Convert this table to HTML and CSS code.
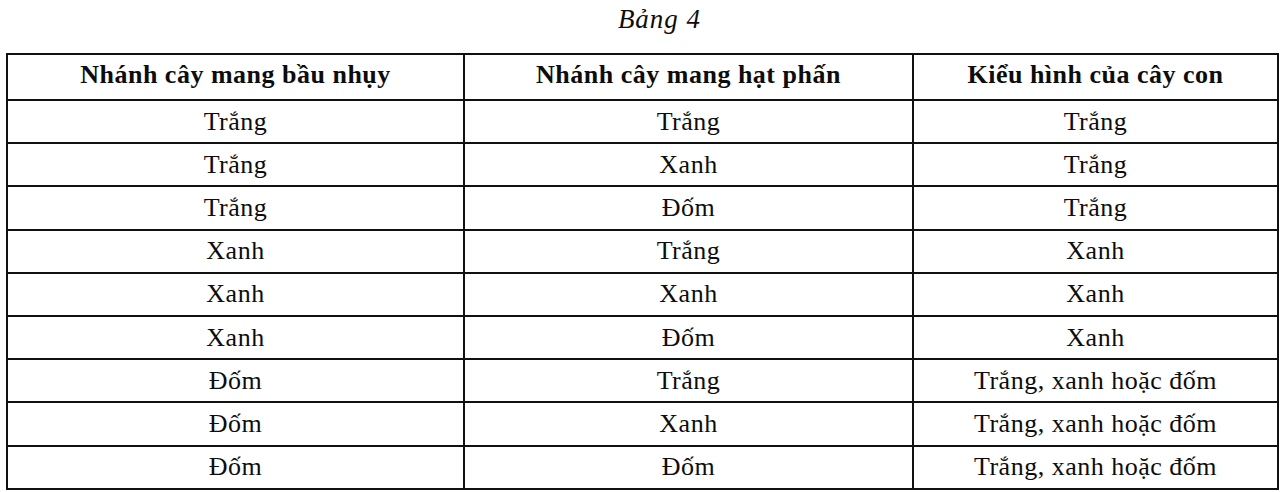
FILE: index.html
```html
<!DOCTYPE html>
<html lang="vi">
<head>
<meta charset="utf-8">
<title>Bảng 4</title>
<link rel="stylesheet" href="styles.css">
</head>
<body>
<div class="page">
  <div class="caption">Bảng 4</div>
  <table class="data">
    <colgroup>
      <col class="c1">
      <col class="c2">
      <col class="c3">
    </colgroup>
    <thead>
      <tr>
        <th>Nhánh cây mang bầu nhụy</th>
        <th>Nhánh cây mang hạt phấn</th>
        <th>Kiểu hình của cây con</th>
      </tr>
    </thead>
    <tbody>
      <tr><td>Trắng</td><td>Trắng</td><td>Trắng</td></tr>
      <tr><td>Trắng</td><td>Xanh</td><td>Trắng</td></tr>
      <tr><td>Trắng</td><td>Đốm</td><td>Trắng</td></tr>
      <tr><td>Xanh</td><td>Trắng</td><td>Xanh</td></tr>
      <tr><td>Xanh</td><td>Xanh</td><td>Xanh</td></tr>
      <tr><td>Xanh</td><td>Đốm</td><td>Xanh</td></tr>
      <tr><td>Đốm</td><td>Trắng</td><td>Trắng, xanh hoặc đốm</td></tr>
      <tr><td>Đốm</td><td>Xanh</td><td>Trắng, xanh hoặc đốm</td></tr>
      <tr><td>Đốm</td><td>Đốm</td><td>Trắng, xanh hoặc đốm</td></tr>
    </tbody>
  </table>
</div>
</body>
</html>
```

FILE: styles.css
```css
html, body {
  margin: 0;
  padding: 0;
  background: #ffffff;
}

.page {
  width: 1282px;
  height: 492px;
  padding-left: 6px;
  box-sizing: border-box;
  font-family: "Liberation Serif", "Times New Roman", serif;
  color: #0d0d0d;
}

.caption {
  height: 53px;
  box-sizing: border-box;
  padding-top: 4px;
  padding-left: 36px;
  width: 1271px;
  text-align: center;
  font-style: italic;
  font-size: 27px;
  letter-spacing: 1px;
  line-height: 30px;
}

.data {
  border-collapse: collapse;
  table-layout: fixed;
  width: 1271px;
  border: 2px solid #111111;
}

.c1 { width: 457px; }
.c2 { width: 449px; }
.c3 { width: 365px; }

.data th,
.data td {
  border: 2px solid #111111;
  text-align: center;
  vertical-align: middle;
  padding: 0;
  font-size: 26px;
  letter-spacing: 0.5px;
  line-height: 30px;
}

.data th {
  height: 46px;
  font-weight: bold;
  padding-bottom: 4px;
  box-sizing: border-box;
}

.data td {
  height: 41.2px;
}
```
